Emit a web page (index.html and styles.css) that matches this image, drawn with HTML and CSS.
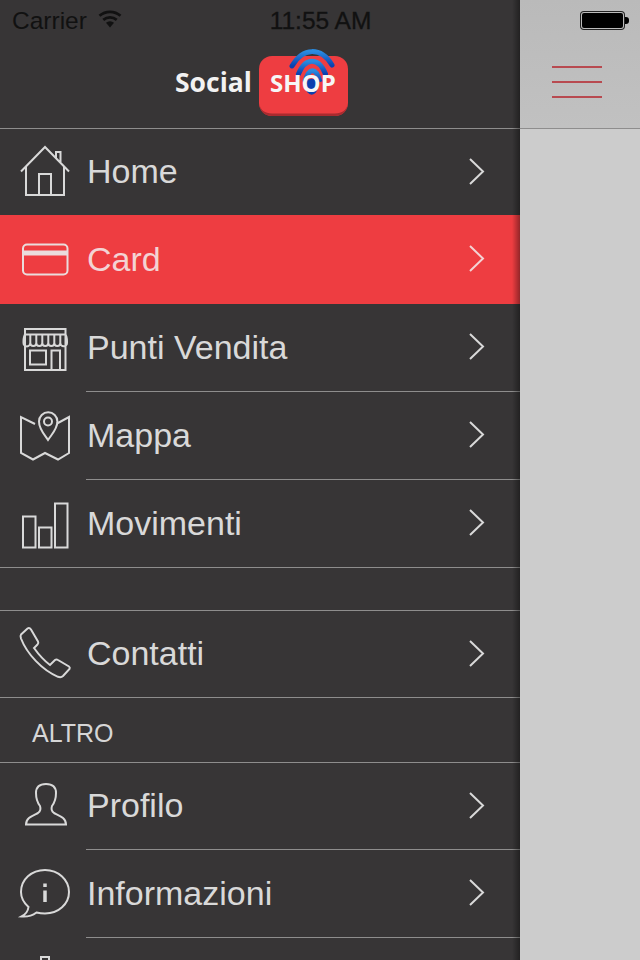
FILE: index.html
```html
<!DOCTYPE html>
<html>
<head>
  <meta charset="UTF-8">
  <title>Social Shop</title>
  <link rel="stylesheet" href="styles.css">
</head>
<body>
<div class="screen">
  <div class="statusbar">
    <div class="status-left">
      <span>Carrier</span>
      <svg class="wifi" width="26" height="19" viewBox="0 0 26 19"><path d="M13 18.500 9 13.800a6 6 0 0 1 8 0Z" fill="#111"/><path d="M6.300 10.800a10.500 10.500 0 0 1 13.400 0M2.500 6.800a16 16 0 0 1 21 0" fill="none" stroke="#111" stroke-width="2.800"/></svg>
    </div>
    <div class="status-time">11:55 AM</div>
    <div class="status-right">
      <span class="battery"></span><span class="battery-tip"></span>
    </div>
  </div>

  <div class="sidebar">
    <div class="logo-bar">
      <svg class="logo" width="180" height="76" viewBox="0 0 180 76">
        <defs>
          <linearGradient id="wave" x1="0" y1="0" x2="0" y2="1"><stop offset="0" stop-color="#2a8be0"/><stop offset="1" stop-color="#0b3fae"/></linearGradient>
        </defs>
        <text x="2" y="46.500" class="logo-social">Social</text>
        <rect x="86" y="11" width="89" height="60" rx="13" fill="#ee3d41"/>
        <path d="M86 58c1 8 5 13 13 13h63c8 0 12-5 13-13-1 7-6 10.500-13 10.500H99c-7 0-12-3.500-13-10.500Z" fill="#a82b2f"/>
        <path d="M119 21c11-19 29-19 40-1" fill="none" stroke="url(#wave)" stroke-width="5" stroke-linecap="round"/>
        <path d="M125.500 29c7-17 20-17 27 0" fill="none" stroke="url(#wave)" stroke-width="5" stroke-linecap="round"/>
        <path d="M132 37c4-15 11-15 15 0" fill="none" stroke="url(#wave)" stroke-width="5"/>
        <ellipse cx="138.700" cy="41.700" rx="6" ry="8" fill="#0b3fae"/>
        <text x="97" y="47" class="logo-shop">SHOP</text>
      </svg>
    </div>

    <a class="row row-home">
      <svg class="icon" viewBox="0 0 50 50"><path d="M1 25.500 25 1l24 24.500M6 20v29h38V20M19 49V28h12v21M36 11.500V6h4.500v10"/></svg>
      <span class="label">Home</span>
      <svg class="chevron" viewBox="0 0 16 27"><path d="M1 1l13 12.500L1 26"/></svg>
    </a>
    <a class="row row-active">
      <svg class="icon" viewBox="0 0 50 50"><rect x="3" y="9.500" width="44.500" height="30" rx="4"/><path class="stripe" d="M3 18h44.500"/></svg>
      <span class="label">Card</span>
      <svg class="chevron" viewBox="0 0 16 27"><path d="M1 1l13 12.500L1 26"/></svg>
    </a>
    <a class="row row-inset">
      <svg class="icon" viewBox="0 0 50 50"><path d="M5 23V6h40.500v17M5 23v24h40.500V23M5 11.500h40.500M3.500 18c0-3 1-6.500 1.500-6.500M47 18c0-3-1-6.500-1.500-6.500M10 27.500h16v14H10zM31.500 47V27.500H40V47M3.500 18v2a3 3 0 0 0 6.800 0v-8.500M10.300 20a3 3 0 0 0 6 0v-8.500M16.300 20a3 3 0 0 0 6 0v-8.500M22.300 20a3 3 0 0 0 6 0v-8.500M28.300 20a3 3 0 0 0 6 0v-8.500M34.300 20a3 3 0 0 0 6 0v-8.500M40.300 20a3 3 0 0 0 6.700 0v-2"/></svg>
      <span class="label">Punti Vendita</span>
      <svg class="chevron" viewBox="0 0 16 27"><path d="M1 1l13 12.500L1 26"/></svg>
    </a>
    <a class="row row-inset">
      <svg class="icon" viewBox="0 0 50 50"><path d="M15 13 1 6v36l12 6.500L25 42l13 6.500L49 42V6l-12 6.500"/><path d="M28 29c-4-6-9-11-9-18.500a9.200 9.200 0 0 1 18.400 0C37.400 18 32 23 28 29Z"/><circle cx="28" cy="10.500" r="4"/></svg>
      <span class="label">Mappa</span>
      <svg class="chevron" viewBox="0 0 16 27"><path d="M1 1l13 12.500L1 26"/></svg>
    </a>
    <a class="row">
      <svg class="icon" viewBox="0 0 50 50"><rect x="3" y="17.500" width="12.500" height="31"/><rect x="19" y="28.500" width="12.500" height="20"/><rect x="35" y="4.500" width="12.500" height="44"/></svg>
      <span class="label">Movimenti</span>
      <svg class="chevron" viewBox="0 0 16 27"><path d="M1 1l13 12.500L1 26"/></svg>
    </a>

    <div class="spacer"></div>

    <a class="row row-short">
      <svg class="icon" viewBox="0 0 50 50"><path d="M1 5.500 7.500-.5c1.500-1 2.500-.5 3.500 1l7 12c.7 1.300.5 2-.5 3l-3.500 3.500c5 7 10 12.500 16 17l5-5c1-.8 1.800-.8 3 0l11 6.500c1 .7 1 1.500.5 2.500L43 47c-1.500 1.500-3 1.500-5 .8C22 41 7 25 1 9.500.5 8 .3 6.500 1 5.500Z"/></svg>
      <span class="label">Contatti</span>
      <svg class="chevron" viewBox="0 0 16 27"><path d="M1 1l13 12.500L1 26"/></svg>
    </a>

    <div class="section-title">ALTRO</div>

    <a class="row row-inset row-short">
      <svg class="icon" viewBox="0 0 50 50"><path d="M6 43.500h40C46 37 40 35 34 32c-3-2-3-4-2-7 3-4 4-9 4-13 0-6-4-9-10-9s-10 3-10 9c0 4 1 9 4 13 1 3 1 5-2 7-6 3-12 5-12 11.500Z"/></svg>
      <span class="label">Profilo</span>
      <svg class="chevron" viewBox="0 0 16 27"><path d="M1 1l13 12.500L1 26"/></svg>
    </a>
    <a class="row row-inset">
      <svg class="icon" viewBox="0 0 50 50"><path d="M25 1C11.500 1 1 10.500 1 23c0 6 3 11 7.500 15-.5 4-3 7.500-7 9.500 6 .5 11-1 15-4 2.800.7 5.500 1 8.500 1 13.500 0 24-9.500 24-21.500S38.500 1 25 1Z"/><path class="stripe-thin" d="M25 21.500V33M25 14.500V18"/></svg>
      <span class="label">Informazioni</span>
      <svg class="chevron" viewBox="0 0 16 27"><path d="M1 1l13 12.500L1 26"/></svg>
    </a>
    <a class="row">
      <svg class="icon" viewBox="0 0 50 50"><path d="M21 9V0h8v9"/></svg>
    </a>
  </div>

  <div class="content">
    <div class="content-bar">
      <div class="burger"><span></span><span></span><span></span></div>
    </div>
  </div>
</div>
</body>
</html>
```

FILE: styles.css
```css
html, body {
    margin: 0;
    padding: 0;
}
.screen {
    position: relative;
    display: flex;
    width: 640px;
    height: 960px;
    overflow: hidden;
    background: #cccccc;
    font-family: "Liberation Sans", Arial, sans-serif;
}

/* status bar lies over both panels */
.statusbar {
    position: absolute;
    top: 0;
    left: 0;
    right: 0;
    z-index: 3;
    height: 40px;
    display: grid;
    grid-template-columns: 1fr auto 1fr;
    align-items: center;
    padding: 1px 11px 0 12px;
    box-sizing: border-box;
    color: #111;
    font-size: 24.5px;
}
.status-left {
    display: flex;
    align-items: center;
    gap: 10px;
}
.wifi {
    margin-top: -4px;
}
.status-time {
    -webkit-text-stroke: 0.3px #111;
}
.status-right {
    display: flex;
    justify-content: flex-end;
    align-items: center;
}
.battery {
    width: 41px;
    height: 15px;
    border-radius: 2px;
    background: #000;
    box-shadow: 0 0 0 1px #bbb, 0 0 0 2px #222;
}
.battery-tip {
    width: 4px;
    height: 7px;
    margin-left: 2px;
    border-radius: 0 3px 3px 0;
    background: #000;
}

/* left menu */
.sidebar {
    position: relative;
    flex: 0 0 520px;
    height: 960px;
    overflow: hidden;
    background: #373536;
}
.sidebar::after {
    content: "";
    position: absolute;
    top: 0;
    bottom: 0;
    right: 0;
    width: 8px;
    background: linear-gradient(to right, rgba(0, 0, 0, 0), rgba(0, 0, 0, 0.38));
}
.logo-bar {
    height: 129px;
    box-sizing: border-box;
    padding: 45px 0 0 173px;
    border-bottom: 1px solid #8e8d8d;
}
.logo {
    display: block;
    overflow: visible;
}
.logo-social {
    font-family: "Open Sans", sans-serif;
    font-size: 26.5px;
    font-weight: 700;
    fill: #f2f2f2;
}
.logo-shop {
    font-family: "Open Sans", sans-serif;
    font-size: 24px;
    font-weight: 700;
    fill: #f6f6f6;
}
.row {
    position: relative;
    display: flex;
    align-items: center;
    height: 88px;
    box-sizing: border-box;
    padding: 0 35px 0 20px;
    border-bottom: 1px solid #8e8d8d;
    color: #d9d9d9;
}
.row-home {
    height: 86px;
    padding-bottom: 2px;
    border-bottom: none;
}
.row-short {
    height: 87px;
}
.row-inset {
    padding-bottom: 1px;
    border-bottom: none;
}
.row-inset::after {
    content: "";
    position: absolute;
    left: 86px;
    right: 0;
    bottom: 0;
    height: 1px;
    background: #8e8d8d;
}
.row-active {
    background: #ee3d41;
    border-bottom: none;
    height: 89px;
    color: #f3d3d4;
}
.icon {
    flex: none;
    width: 50px;
    height: 50px;
    overflow: visible;
    fill: none;
    stroke: #d9d9d9;
    stroke-width: 2;
}
.row-active .icon {
    stroke: #eadcdc;
}
.stripe {
    stroke-width: 5;
}
.stripe-thin {
    stroke-width: 3.5;
}
.label {
    flex: 1;
    margin-left: 17px;
    margin-bottom: 2px;
    font-size: 34px;
    line-height: 1;
}
.chevron {
    flex: none;
    width: 16px;
    height: 27px;
    margin-bottom: 2px;
    fill: none;
    stroke: #d9d9d9;
    stroke-width: 2;
}
.row-home .label,
.row-home .chevron {
    margin-bottom: 0;
}
.row-active .chevron {
    stroke: #f3d3d4;
}
.spacer {
    height: 43px;
    border-bottom: 1px solid #8e8d8d;
    box-sizing: border-box;
}
.section-title {
    height: 65px;
    box-sizing: border-box;
    padding: 21px 0 0 32px;
    border-bottom: 1px solid #8e8d8d;
    color: #d6d6d6;
    font-size: 25px;
    line-height: 28px;
}

/* right side */
.content {
    flex: 1;
}
.content-bar {
    height: 129px;
    box-sizing: border-box;
    padding: 66px 0 0 32px;
    background: linear-gradient(#bababa, #c1c1c1);
    border-bottom: 1px solid #8e8d8d;
}
.burger {
    display: flex;
    flex-direction: column;
    gap: 13px;
    width: 50px;
}
.burger span {
    height: 2px;
    background: #b84a50;
}
```
